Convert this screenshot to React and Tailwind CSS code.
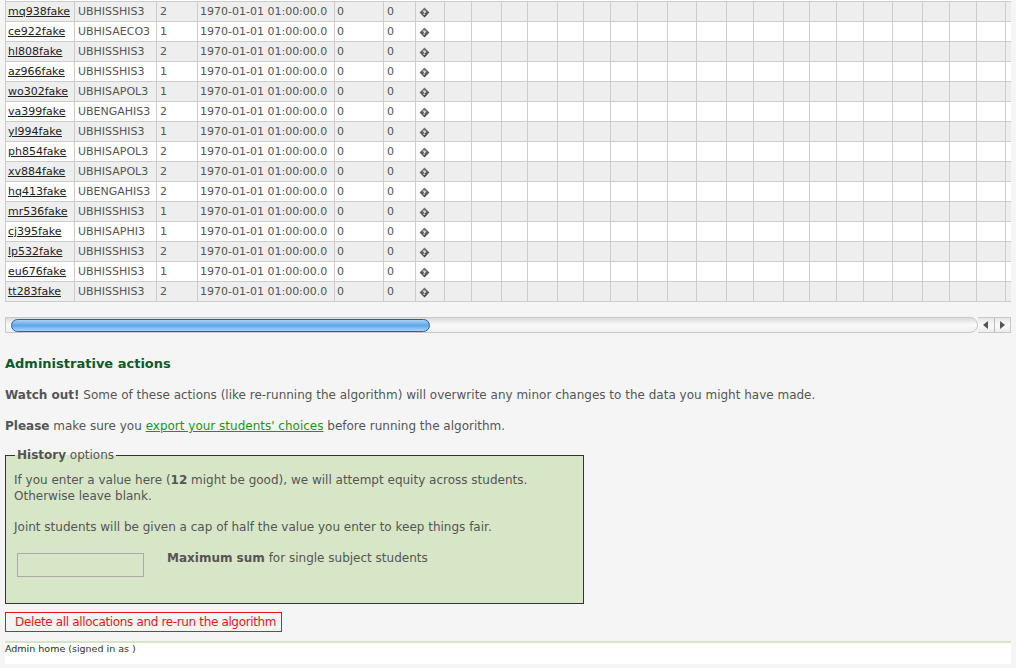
import React from "react";

const rows = [
  ["mq938fake", "UBHISSHIS3", "2"],
  ["ce922fake", "UBHISAECO3", "1"],
  ["hl808fake", "UBHISSHIS3", "2"],
  ["az966fake", "UBHISSHIS3", "1"],
  ["wo302fake", "UBHISAPOL3", "1"],
  ["va399fake", "UBENGAHIS3", "2"],
  ["yl994fake", "UBHISSHIS3", "1"],
  ["ph854fake", "UBHISAPOL3", "2"],
  ["xv884fake", "UBHISAPOL3", "2"],
  ["hq413fake", "UBENGAHIS3", "2"],
  ["mr536fake", "UBHISSHIS3", "1"],
  ["cj395fake", "UBHISAPHI3", "1"],
  ["lp532fake", "UBHISSHIS3", "2"],
  ["eu676fake", "UBHISSHIS3", "1"],
  ["tt283fake", "UBHISSHIS3", "2"],
];

const emptyCols = [
  "w-[27px]", "w-[30px]", "w-[26px]", "w-[30px]", "w-[26px]", "w-[27px]",
  "w-[27px]", "w-[30px]", "w-[29px]", "w-[30px]", "w-[27px]", "w-[30px]",
  "w-[26px]", "w-[27px]", "w-[27px]", "w-[29px]", "w-[30px]", "w-[27px]",
  "w-[27px]", "w-[29px]", "w-[40px]",
];

function Cell({ w, children, className = "" }) {
  return (
    <div className={`${w} flex-none border-r border-[#cccccc] pl-[2px] whitespace-nowrap overflow-hidden ${className}`}>
      {children}
    </div>
  );
}

function Unknown() {
  return (
    <span className="ml-[1px] mt-[5px] flex h-[10px] w-[10px] items-center justify-center">
      <span className="relative flex h-[7px] w-[7px] rotate-45 items-center justify-center bg-gradient-to-br from-[#7a7a7a] to-[#444444]">
        <span className="-rotate-45 text-[6px] font-bold leading-[6px] text-white">?</span>
      </span>
    </span>
  );
}

function Row({ r, i }) {
  const bg = i % 2 === 0 ? "bg-[#eeeeee]" : "bg-white";
  return (
    <div className={`flex h-[20px] border-t border-[#cccccc] ${bg} leading-[19px]`}>
      <Cell w="w-[69px]">
        <a href="#" className="text-[#222222] underline">{r[0]}</a>
      </Cell>
      <Cell w="w-[82px]" className="pl-[3px]">{r[1]}</Cell>
      <Cell w="w-[41px]" className="pl-[3px]">{r[2]}</Cell>
      <Cell w="w-[137px]" className="pl-[2px]">1970-01-01 01:00:00.0</Cell>
      <Cell w="w-[49px]">0</Cell>
      <Cell w="w-[32px]" className="pl-[3px]">0</Cell>
      <Cell w="w-[29px]" className="pl-[1px]">
        <Unknown />
      </Cell>
      {emptyCols.map((w, k) => (
        <Cell key={k} w={w}>{""}</Cell>
      ))}
    </div>
  );
}

export default function App() {
  return (
    <div className="min-h-screen bg-[#f5f5f5] font-['DejaVu_Sans',Verdana,sans-serif] text-[#555555]">
      {/* table */}
      <div className="ml-[5px] w-[1006px] overflow-hidden">
        <div className="w-[1100px] border-l border-[#cccccc] text-[11px]">
          <div className="h-[1px] bg-white"></div>
          {rows.map((r, i) => (
            <Row key={i} r={r} i={i} />
          ))}
          <div className="border-t border-[#cccccc]"></div>
        </div>
      </div>

      {/* scrollbar */}
      <div className="ml-[5px] mt-[15px] flex h-[16px] w-[1006px]">
        <div className="relative flex-1 rounded-r-full border border-[#c8c8c8] bg-gradient-to-b from-[#dcdcdc] via-[#fafafa] to-[#efefef]">
          <div className="absolute left-[5px] top-[1px] h-[13px] w-[419px] rounded-full border border-[#1f5fb8] bg-gradient-to-b from-[#a9d0f5] via-[#5ea7ea] to-[#a7d4f7]"></div>
        </div>
        <div className="flex w-[33px] items-center border-y border-r border-[#c8c8c8] bg-gradient-to-b from-[#e6e6e6] via-[#fbfbfb] to-[#ececec]">
          <div className="flex h-full flex-1 items-center justify-center border-r border-[#bbbbbb]">
            <div className="h-0 w-0 border-y-[4px] border-r-[5px] border-y-transparent border-r-[#555555]"></div>
          </div>
          <div className="flex h-full flex-1 items-center justify-center">
            <div className="h-0 w-0 border-y-[4px] border-l-[5px] border-y-transparent border-l-[#555555]"></div>
          </div>
        </div>
      </div>

      {/* admin actions */}
      <div className="px-[5px] text-[12px] leading-[16px]">
        <h2 className="mt-[23px] text-[13px] font-bold leading-[16px] text-[#0e5a2a]">
          Administrative actions
        </h2>
        <p className="mt-[15px]">
          <b>Watch out!</b> Some of these actions (like re-running the algorithm) will overwrite any minor changes to the data you might have made.
        </p>
        <p className="mt-[15px]">
          <b>Please</b> make sure you{" "}
          <a href="#" className="text-[#1e931e] underline">export your students' choices</a>{" "}
          before running the algorithm.
        </p>

        <fieldset className="mt-[13px] w-[579px] border border-[#333333] bg-[#d7e6c7] px-[8px] pb-[26px]">
          <legend className="ml-[1px] px-[2px]">
            <b>History</b> options
          </legend>
          <p className="mt-[9px]">
            If you enter a value here (<b>12</b> might be good), we will attempt equity across students.
            <br />
            Otherwise leave blank.
          </p>
          <p className="mt-[15px]">
            Joint students will be given a cap of half the value you enter to keep things fair.
          </p>
          <div className="mt-[15px] flex items-start">
            <input
              type="text"
              className="ml-[3px] mt-[3px] h-[24px] w-[127px] border border-[#aaaaaa] bg-[#d7e6c7] outline-none"
            />
            <span className="ml-[23px]">
              <b>Maximum sum</b> for single subject students
            </span>
          </div>
        </fieldset>

        <button className="mt-[8px] block h-[20px] w-[277px] whitespace-nowrap border border-[#e8141c] px-[9px] text-left text-[12px] leading-[18px] tracking-[-0.35px] text-[#e8141c]">
          Delete all allocations and re-run the algorithm
        </button>
      </div>

      {/* footer */}
      <div className="ml-[5px] mt-[9px] h-[23px] w-[1006px] border-t-2 border-[#d5e5c5] bg-white text-[9.5px] leading-[12px]">
        <span className="text-[#113322]">Admin home</span>{" "}
        <span className="text-[#333333]">(signed in as )</span>
      </div>
    </div>
  );
}
